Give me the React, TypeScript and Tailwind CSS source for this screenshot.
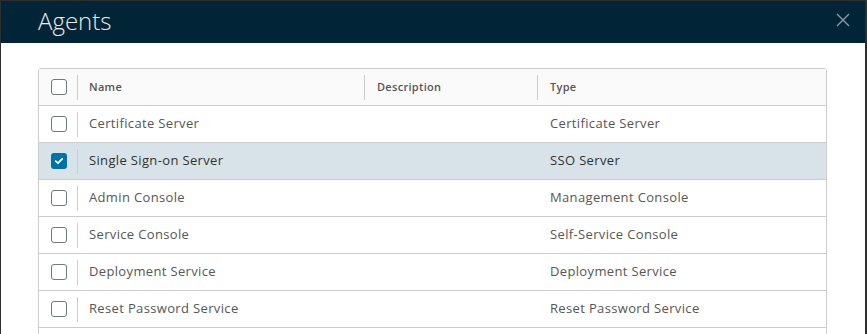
import React from "react"

type Agent = {
  name: string
  type: string
  checked?: boolean
}

const agents: Agent[] = [
  { name: "Certificate Server", type: "Certificate Server" },
  { name: "Single Sign-on Server", type: "SSO Server", checked: true },
  { name: "Admin Console", type: "Management Console" },
  { name: "Service Console", type: "Self-Service Console" },
  { name: "Deployment Service", type: "Deployment Service" },
  { name: "Reset Password Service", type: "Reset Password Service" },
  { name: "", type: "" },
]

function Checkbox({ checked }: { checked?: boolean }) {
  if (checked) {
    return (
      <div className="w-4 h-4 rounded-[3px] bg-[#0072a3] flex items-center justify-center">
        <svg width="10" height="10" viewBox="0 0 10 10" fill="none">
          <path d="M1.8 5.2 L4 7.2 L8.2 2.8" stroke="white" strokeWidth="1.8" strokeLinecap="round" strokeLinejoin="round" />
        </svg>
      </div>
    )
  }
  return <div className="w-4 h-4 rounded-[3px] border border-[#6b7a85] bg-white" />
}

function Sep() {
  return <div className="w-px h-[25px] bg-[#cccccc] shrink-0" />
}

export default function App() {
  return (
    <div className="w-[867px] h-[334px] bg-[#2e2e2e] pt-px pl-px overflow-hidden" style={{ fontFamily: "'Open Sans', Lato, sans-serif" }}>
      <div className="w-[864px] h-[400px] bg-white">
        {/* header */}
        <div className="h-[42px] bg-[#012437] flex items-center justify-between pl-[37px] pr-[15px]">
          <h1 className="text-[24px] font-light text-[#eaeaea] leading-none -mt-0.5">Agents</h1>
          <svg width="14" height="14" viewBox="0 0 14 14" fill="none" className="-mt-1">
            <path d="M1 1 L13 13 M13 1 L1 13" stroke="#8d9aa2" strokeWidth="1.4" />
          </svg>
        </div>

        {/* body */}
        <div className="pt-[25px] pl-[37px] pr-[38px]">
          <div className="border border-[#cccccc] rounded-t-[3px] text-[13px] tracking-[0.35px]">
            {/* table header */}
            <div className="grid grid-cols-[38px_287px_173px_1fr] h-[37px] bg-[#fafafa] border-b border-[#cccccc] text-[11px] font-semibold text-[#565656] tracking-[0.3px]">
              <div className="flex items-center pl-3">
                <Checkbox />
              </div>
              <div className="flex items-center">
                <Sep />
                <span className="pl-[11px]">Name</span>
              </div>
              <div className="flex items-center">
                <Sep />
                <span className="pl-[12px]">Description</span>
              </div>
              <div className="flex items-center">
                <Sep />
                <span className="pl-[12px]">Type</span>
              </div>
            </div>

            {agents.map((a, i) => (
              <div
                key={i}
                className={
                  "grid grid-cols-[38px_287px_173px_1fr] h-[37px] border-b border-[#cccccc] " +
                  (a.checked ? "bg-[#d8e3e9] text-[#313131]" : "bg-white text-[#565656]")
                }
              >
                <div className="flex items-center pl-3">
                  <Checkbox checked={a.checked} />
                </div>
                <div className="flex items-center">
                  <Sep />
                  <span className="pl-[11px]">{a.name}</span>
                </div>
                <div />
                <div className="flex items-center">
                  <span className="pl-[13px]">{a.type}</span>
                </div>
              </div>
            ))}
          </div>
        </div>
      </div>
    </div>
  )
}
